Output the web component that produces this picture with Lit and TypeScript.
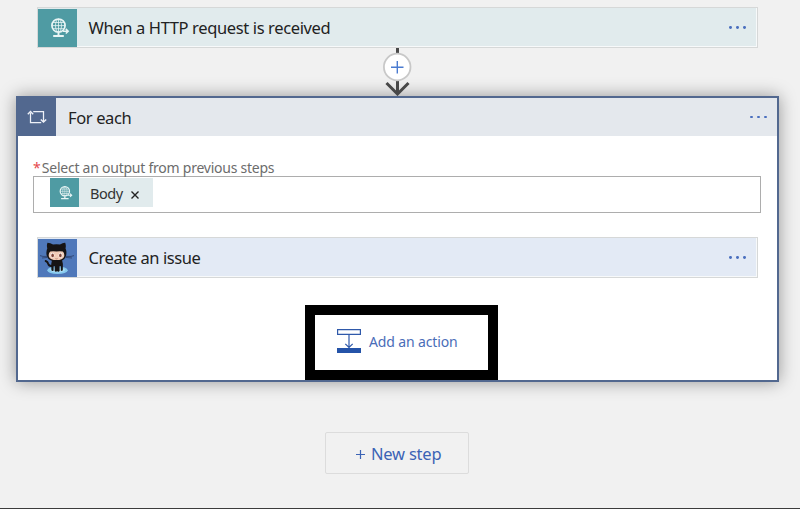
import { LitElement, html, css, svg } from "lit";
import { customElement, property } from "lit/decorators.js";

const globe = svg`
  <g fill="none" stroke="#e9f5f5" stroke-width="1.1">
    <circle cx="12.5" cy="8.6" r="6.6" stroke-width="1.7"/>
    <ellipse cx="12.5" cy="8.6" rx="3" ry="6.4" stroke-width=".8"/>
    <path d="M6 8.6H19M7 5.5H18M7 11.7H18M12.5 2V15" stroke-width=".8"/>
    <path d="M12.5 15.5V18.5M7.2 19H17.8" stroke-width="1.9"/>
    <path d="M17 14.2H21.5M19.8 11.9L22.2 14.2L19.8 16.5" stroke-width="1.5"/>
  </g>`;

const loop = svg`
  <g fill="none" stroke="#eef1f8" stroke-width="1.25">
    <path d="M3.5 3V12.5H14.2M6.2 1.5H16.5V11.5"/>
    <path d="M.8 4.3L3.5 1.6L6.2 4.3M13.8 9.4L16.5 12.1L19.2 9.4" stroke-width="1.4"/>
  </g>`;

const octocat = svg`
  <ellipse cx="19.5" cy="31.3" rx="10.2" ry="3.8" fill="#86c9ee"/>
  <ellipse cx="19.5" cy="31" rx="7.5" ry="2.3" fill="#a9dcf5"/>
  <path d="M14.5 26.8Q11 27.6 10.2 24.8Q9.6 22.5 7.7 22" fill="none" stroke="#161414" stroke-width="2" stroke-linecap="round"/>
  <path d="M14.2 20H23.8Q25.6 25 24.8 31Q24 32.8 22.8 31.6V27H21.6V32Q20.5 33.4 19.5 32.2H18.8Q17.6 33.4 16.7 32V27H15.6V31.4Q14.4 32.8 13.4 31.3Q12.6 25 14.2 20Z" fill="#161414"/>
  <path d="M9.5 3.7Q12.5 3.7 15 5.5Q18.5 4.9 22 5.5Q24.7 3.6 27.2 3.7Q28.3 6.6 27.5 9.3Q29.2 13.5 27.8 17.4Q25.8 22.5 18.5 22.5T9 17.4Q7.6 13.2 9.3 9.3Q8.4 6.6 9.5 3.7Z" fill="#161414"/>
  <path d="M12.3 12.6Q15 12 18.5 12.6Q22 12 24.8 12.6Q27 14.5 26 17.9Q24.7 21 18.5 21T11 17.9Q10 14.5 12.3 12.6Z" fill="#f1cdb8"/>
  <ellipse cx="14.5" cy="16.2" rx="1.9" ry="2.5" fill="#fff"/><ellipse cx="22.5" cy="16.2" rx="1.9" ry="2.5" fill="#fff"/>
  <ellipse cx="14.6" cy="16.4" rx="1.3" ry="1.9" fill="#824638"/><ellipse cx="22.4" cy="16.4" rx="1.3" ry="1.9" fill="#824638"/>
  <path d="M17.4 19.6Q18.5 20.3 19.6 19.6" fill="none" stroke="#9a5c4c" stroke-width=".6"/>
  <path d="M2 16.6L5 17.4H9.5M4 19L9.5 18.4M36 16.6L33 17.4H27.5M34 19L27.5 18.4" fill="none" stroke="#27375c" stroke-width=".7"/>`;

@customElement("step-header")
export class StepHeader extends LitElement {
  @property() label = "";
  @property({ reflect: true }) kind = "http";

  static styles = css`
    :host { display: flex; align-items: center; box-sizing: border-box; }
    :host([kind="http"]), :host([kind="github"]) {
      height: 41px; width: 721px; border: 1px solid #d6d8d8; padding: 0 2px 0 0;
      box-shadow: inset -1px -1px #f7f9fa;
    }
    :host([kind="http"]) { background: #e1ebed; }
    :host([kind="github"]) { background: #e3eaf5; }
    :host([kind="loop"]) { height: 38px; background: #e4e8ed; }
    .tile { width: 39px; height: 38px; flex: none; display: grid; place-items: center; }
    .http { background: #4f9ba3; }
    .github { background: #4f78ba; }
    .loop { background: #52688f; width: 38px; }
    .tile svg { display: block; }
    .label {
      flex: 1; font-size: 16.5px; line-height: 24px; color: #222; margin-left: 11.5px;
      white-space: nowrap; letter-spacing: var(--track, 0);
    }
    :host([kind="loop"]) .label { padding-top: 2px; margin-left: 12px; }
    .dots { display: flex; gap: 4.2px; margin-right: 9px; }
    .dots i { width: 2.8px; height: 2.8px; border-radius: 50%; background: #4a6fbe; }
    :host([kind="loop"]) .dots { margin-right: 10.5px; }
  `;

  render() {
    const icon =
      this.kind === "http"
        ? html`<svg width="24" height="22" viewBox="0 0 24 22">${globe}</svg>`
        : this.kind === "loop"
          ? html`<svg width="20" height="14" viewBox="0 0 20 14">${loop}</svg>`
          : html`<svg width="39" height="38" viewBox="0 0 39 38">${octocat}</svg>`;
    return html`<div class="tile ${this.kind}">${icon}</div>
      <div class="label">${this.label}</div>
      <div class="dots"><i></i><i></i><i></i></div>`;
  }
}

@customElement("app-root")
export class AppRoot extends LitElement {
  static styles = css`
    :host {
      display: flex; flex-direction: column; box-sizing: border-box; width: 800px; height: 509px;
      padding-top: 7px; background: #f1f1f1; border-bottom: 1px solid #3c3c3c; overflow: hidden;
      font-family: "Noto Sans", "Open Sans", sans-serif;
    }
    .trigger { margin-left: 37px; --track: -0.37px; }
    .arrow { display: block; margin-left: 381px; width: 33px; height: 48px; position: relative; z-index: 1; }
    .scope {
      margin-left: 16px; width: 763px; height: 286px; box-sizing: border-box; border: 2px solid #52688f;
      background: #fff; box-shadow: 0 0 16px rgba(0, 0, 0, .38); display: flex; flex-direction: column;
    }
    .loop { --track: -0.38px; }
    .field { margin: 24px 0 0 15px; width: 728px; }
    .caption { font-size: 14px; line-height: 16px; color: #6c6c6c; letter-spacing: -.24px; white-space: nowrap; }
    .caption b { color: #e5484d; font-weight: 400; margin-right: 1.3px; }
    .input { height: 37px; box-sizing: border-box; border: 1px solid #adadad; padding: 1px 0 0 16px; }
    .token { width: 103px; height: 29px; display: flex; align-items: center; background: #e1ebed; }
    .token > svg { margin-top: 4px; }
    .tile { width: 29px; height: 29px; background: #4f9ba3; display: grid; place-items: center; }
    .name { font-size: 14.5px; line-height: 20px; color: #333; margin-left: 11px; letter-spacing: -.45px; width: 41px; }
    .action { margin: 24px 0 0 19px; --track: -0.43px; }
    .add {
      margin: 27px 0 0 287px; width: 193px; height: 75px; box-sizing: border-box; border: 10px solid #000;
      display: flex; align-items: center; padding: 0 0 2px 22px; font-size: 14px; color: #4a6db8;
      white-space: nowrap; letter-spacing: -.13px;
    }
    .add svg { margin: -2px 8px 0 0; }
    .new {
      margin: 50px 0 0 325px; width: 144px; height: 42px; box-sizing: border-box; border: 1px solid #dcdcdc;
      border-radius: 2px; display: flex; align-items: center; padding-left: 30px;
      color: #3b63b5; font-size: 16.5px; letter-spacing: -.22px; white-space: nowrap;
    }
    .new svg { margin: 2px 6px 0 0; }
  `;

  render() {
    return html`
      <step-header class="trigger" kind="http" label="When a HTTP request is received"></step-header>
      <svg class="arrow" viewBox="0 0 33 48">
        <path d="M16.5 0V46M5.5 35L16.5 46L27.5 35" fill="none" stroke="#484848" stroke-width="3"/>
        <circle cx="16.2" cy="19" r="13.3" fill="#fff" stroke="#c8c8c8" stroke-width="1.8"/>
        <path d="M10 19.3H22.5M16.3 13V25.5" stroke="#4a7bd0" stroke-width="1.4"/>
      </svg>
      <div class="scope">
        <step-header class="loop" kind="loop" label="For each"></step-header>
        <div class="field">
          <div class="caption"><b>*</b>Select an output from previous steps</div>
          <div class="input">
            <div class="token">
              <div class="tile"><svg width="17" height="16" viewBox="0 0 24 22">${globe}</svg></div>
              <span class="name">Body</span>
              <svg width="8" height="8" viewBox="0 0 8 8"><path d="M.5 .5L7.5 7.5M7.5 .5L.5 7.5" stroke="#222" stroke-width="1.4"/></svg>
            </div>
          </div>
        </div>
        <step-header class="action" kind="github" label="Create an issue"></step-header>
        <div class="add">
          <svg width="24" height="24" viewBox="0 0 24 24">
            <path d="M.6 .6H23.4V5.4H.6Z" fill="#fff" stroke="#2f59aa" stroke-width="1.2"/>
            <path d="M0 19H24V24H0Z" fill="#2453a8"/>
            <path d="M12 6V19M8.3 14.8L12 18.5L15.7 14.8" fill="none" stroke="#2f59aa" stroke-width="1.2"/>
          </svg>Add an action
        </div>
      </div>
      <div class="new">
        <svg width="9" height="9" viewBox="0 0 9 9"><path d="M0 4.5H9M4.5 0V9" stroke="#3b63b5" stroke-width="1.2"/></svg>New step
      </div>`;
  }
}
